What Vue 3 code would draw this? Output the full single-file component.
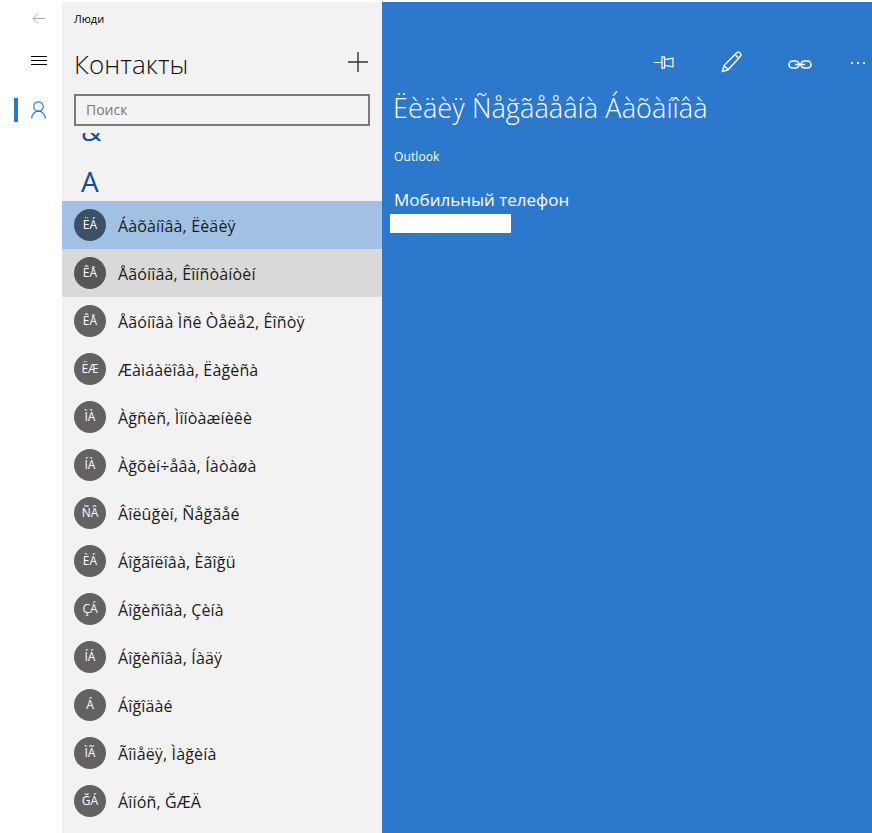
<script setup>
const contacts = [
  { initials: 'ËÁ', name: 'Áàõàíîâà, Ëèäèÿ', state: 'selected' },
  { initials: 'ÊÅ', name: 'Åãóíîâà, Êîíñòàíòèí', state: 'hover' },
  { initials: 'ÊÅ', name: 'Åãóíîâà Ìñê Òåëå2, Êîñòÿ' },
  { initials: 'ËÆ', name: 'Æàìáàëîâà, Ëàğèñà' },
  { initials: 'ÌÀ', name: 'Àğñèñ, Ìîíòàæíèêè' },
  { initials: 'ÍÀ', name: 'Àğõèí÷åâà, Íàòàøà' },
  { initials: 'ÑÂ', name: 'Âîëûğèí, Ñåğãåé' },
  { initials: 'ÈÁ', name: 'Áîğãîëîâà, Èãîğü' },
  { initials: 'ÇÁ', name: 'Áîğèñîâà, Çèíà' },
  { initials: 'ÍÁ', name: 'Áîğèñîâà, Íàäÿ' },
  { initials: 'Á', name: 'Áîğîäàé' },
  { initials: 'ÌÃ', name: 'Ãîìåëÿ, Ìàğèíà' },
  { initials: 'ĞÁ', name: 'Áîíóñ, ĞÆÄ' },
]
</script>

<template>
  <main class="app">
    <!-- left rail -->
    <nav class="rail">
      <button class="rail-btn back">
        <svg width="13" height="11" viewBox="0 0 13 11" fill="none" stroke="#a8a8a8" stroke-width="1">
          <path d="M13 5.500H1M6 .5l-5 5 5 5" />
        </svg>
      </button>
      <button class="rail-btn burger">
        <svg width="16" height="9" viewBox="0 0 16 9" fill="none" stroke="#000" stroke-width="1">
          <path d="M0 .5h16M0 4.500h16M0 8.500h16" />
        </svg>
      </button>
      <button class="rail-btn person">
        <span class="marker"></span>
        <svg width="15" height="18" viewBox="0 0 15 18" fill="none" stroke="#2b78cd" stroke-width="1.200">
          <circle cx="7.500" cy="5.500" r="4.700" />
          <path d="M.7 17.500c0-4 3-7.400 6.800-7.400s6.800 3.400 6.800 7.400" />
        </svg>
      </button>
    </nav>

    <!-- contact list -->
    <section class="list">
      <div class="app-title">Люди</div>
      <header class="list-head">
        <h1>Контакты</h1>
        <svg class="plus" width="20" height="20" viewBox="0 0 20 20" stroke="#333" stroke-width="1.400">
          <path d="M10 0v20M0 10h20" />
        </svg>
      </header>
      <div class="search">Поиск</div>
      <div class="scroller">
        <div class="letter amp">&amp;</div>
        <div class="letter">A</div>
        <div
          v-for="c in contacts"
          :key="c.name"
          class="row"
          :class="c.state"
        >
          <span class="avatar">{{ c.initials }}</span>
          <span class="name">{{ c.name }}</span>
        </div>
      </div>
    </section>

    <!-- details -->
    <section class="detail">
      <div class="toolbar">
        <span class="tool">
          <svg width="21" height="13" viewBox="0 0 21 13" fill="none" stroke="#fff" stroke-width="1.200">
            <path d="M0 6.500h7.500M8 .8h2.500v11.400H8zM10.500 3.600l8.500-1.400v8.600l-8.500-1.400" />
          </svg>
        </span>
        <span class="tool">
          <svg width="22" height="22" viewBox="0 0 22 22" fill="none" stroke="#fff" stroke-width="1.400">
            <path d="M1.500 20.500l1.500-6L15.500 2c1-1 2.500-1 3.500 0s1.200 2.500.2 3.500L7 18.800zM3 14.500l4 4M14 3.500l4 4" />
          </svg>
        </span>
        <span class="tool link">
          <svg width="24" height="9" viewBox="0 0 24 9" fill="none" stroke="#fff" stroke-width="1.600">
            <rect x="1" y="1" width="10" height="7" rx="3.500" />
            <rect x="13" y="1" width="10" height="7" rx="3.500" />
            <path d="M7 4.500h10" />
          </svg>
        </span>
        <span class="dots"><i></i><i></i><i></i></span>
      </div>
      <h2>Ëèäèÿ Ñåğãååâíà Áàõàíîâà</h2>
      <div class="source">Outlook</div>
      <div class="phone-label">Мобильный телефон</div>
      <div class="phone-mask"></div>
    </section>
  </main>
</template>

<style>
html, body {
  margin: 0;
  background: #fff;
}
</style>

<style scoped>
.app {
  display: flex;
  width: 872px;
  height: 833px;
  overflow: hidden;
  font-family: "Open Sans", "Noto Sans", sans-serif;
  color: #000;
}
.rail {
  width: 62px;
  display: flex;
  flex-direction: column;
  flex-shrink: 0;
}
.rail-btn {
  border: 0;
  background: none;
  padding: 0 0 0 15px;
  height: 48px;
  display: flex;
  align-items: center;
  justify-content: center;
  position: relative;
}
.back { height: 36px; }
.burger { height: 49px; }
.person { margin-top: 1px; }
.marker {
  position: absolute;
  left: 14px;
  top: 12px;
  width: 4px;
  height: 24px;
  background: #2b78cd;
}
.list {
  width: 320px;
  flex-shrink: 0;
  margin-top: 2px;
  background: #f2f2f2;
  display: flex;
  flex-direction: column;
}
.app-title {
  font-size: 11px;
  line-height: 16px;
  margin: 9px 0 0 12px;
}
.list-head {
  display: flex;
  justify-content: space-between;
  align-items: center;
  margin: 17px 14px 0 12px;
  height: 40px;
}
.plus {
  margin-bottom: 4px;
}
h1 {
  margin: 0;
  font-size: 26px;
  font-weight: 300;
  letter-spacing: 0.1px;
  line-height: 40px;
  color: #111;
}
.search {
  margin: 10px 12px 0;
  height: 32px;
  box-sizing: border-box;
  border: 2px solid #7a7a7a;
  padding-left: 10px;
  font-size: 14px;
  line-height: 27px;
  color: #777;
  background: #f3f3f3;
}
.scroller {
  flex: 1;
  overflow: hidden;
  margin-top: 7px;
}
.letter {
  padding-left: 19px;
  font-size: 28px;
  line-height: 40px;
  height: 40px;
  color: #0b4f9e;
}
.amp {
  height: 49px;
  margin-top: -21px;
  line-height: 36px;
}
.row {
  height: 48px;
  display: flex;
  align-items: center;
  padding-left: 12px;
  font-size: 16px;
  letter-spacing: 0.15px;
}
.row.selected { background: #a0c1e4; }
.row.hover { background: #d9d9d9; }
.avatar {
  width: 32px;
  height: 32px;
  border-radius: 50%;
  background: #626262;
  color: #fff;
  font-size: 12px;
  letter-spacing: 0;
  text-align: center;
  line-height: 32px;
  flex-shrink: 0;
  margin-right: 12px;
}
.selected .avatar { background: #3d5166; }
.hover .avatar { background: #565656; }
.name {
  color: #1a1a1a;
  white-space: nowrap;
  padding-top: 1px;
}
.detail {
  flex: 1;
  margin-top: 2px;
  background: #2b78cd;
  color: #fff;
  padding: 36px 0 0 12px;
}
.toolbar {
  height: 48px;
  display: flex;
  align-items: center;
  margin-left: 236px;
}
.tool {
  width: 68px;
  display: flex;
  justify-content: center;
}
.tool.link {
  margin-top: 4px;
}
.dots {
  display: flex;
  gap: 4px;
  margin-left: 17px;
  margin-top: 1px;
}
.dots i {
  width: 2px;
  height: 2px;
  background: #fff;
}
h2 {
  margin: 5px 0 0 -1px;
  font-size: 27px;
  font-weight: 300;
  letter-spacing: 0.1px;
  line-height: 34px;
  white-space: nowrap;
}
.source {
  font-size: 12px;
  letter-spacing: 0.1px;
  line-height: 16px;
  margin-top: 24px;
}
.phone-label {
  font-size: 17px;
  line-height: 22px;
  margin-top: 24px;
}
.phone-mask {
  width: 121px;
  height: 19px;
  background: #fff;
  margin: 3px 0 0 -4px;
}
</style>
